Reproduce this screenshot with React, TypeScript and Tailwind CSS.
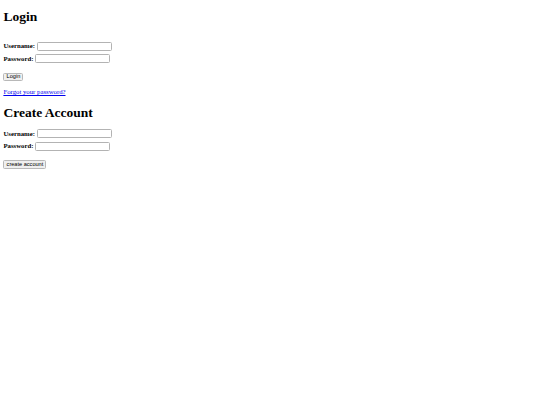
function Field({ label, type = "text" }: { label: string; type?: string }) {
  return (
    <div className="flex h-[8.9px] items-center gap-[1.7px]">
      <label className="text-[6.75px] font-bold leading-normal">{label}</label>
      <input
        type={type}
        className="h-[8.9px] w-[75px] rounded-[1.5px] border border-[#b3b3b3] bg-white"
      />
    </div>
  );
}

function SmallButton({ children }: { children: string }) {
  return (
    <div className="flex">
      <button
        type="button"
        className="h-[8.8px] rounded-[1.5px] border border-[#b8b8b8] bg-[#efefef] px-[2.2px] text-[5.6px] leading-none text-black"
        style={{ fontFamily: '"Liberation Sans", sans-serif' }}
      >
        {children}
      </button>
    </div>
  );
}

export default function App() {
  return (
    <div
      className="flex min-h-screen flex-col bg-white pl-[3.4px] text-black"
      style={{ fontFamily: '"Liberation Serif", serif' }}
    >
      <h1 className="mt-[9.4px] text-[13.5px] font-bold leading-[15px]">Login</h1>

      <form className="mt-[17.3px] flex flex-col">
        <Field label="Username:" />
        <div className="mt-[3.7px]">
          <Field label="Password:" type="password" />
        </div>
        <div className="mt-[9.4px]">
          <SmallButton>Login</SmallButton>
        </div>
      </form>

      <div className="mt-[5.9px] flex">
        <a href="#" className="text-[6.75px] leading-normal text-[#0000ee] underline">
          Forgot your password?
        </a>
      </div>

      <h1 className="mt-[7.8px] text-[13.5px] font-bold leading-[15px]">Create Account</h1>

      <form className="mt-[9.1px] flex flex-col">
        <Field label="Username:" />
        <div className="mt-[3.7px]">
          <Field label="Password:" type="password" />
        </div>
        <div className="mt-[9.4px]">
          <SmallButton>create account</SmallButton>
        </div>
      </form>
    </div>
  );
}
